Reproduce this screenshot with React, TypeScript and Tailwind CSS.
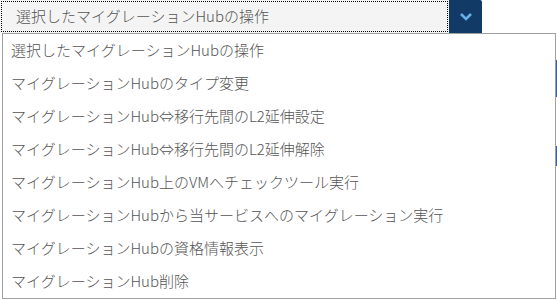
import React from "react";

const items: string[] = [
  "選択したマイグレーションHubの操作",
  "マイグレーションHubのタイプ変更",
  "マイグレーションHub⇔移行先間のL2延伸設定",
  "マイグレーションHub⇔移行先間のL2延伸解除",
  "マイグレーションHub上のVMへチェックツール実行",
  "マイグレーションHubから当サービスへのマイグレーション実行",
  "マイグレーションHubの資格情報表示",
  "マイグレーションHub削除",
];

const App: React.FC = () => {
  return (
    <div
      className="relative w-[557px] h-[300px] bg-white overflow-hidden flex flex-col"
      style={{ fontFamily: '"Noto Sans CJK JP", "Noto Sans", sans-serif' }}
    >
      {/* select */}
      <div className="flex w-[482px] h-[33px] shrink-0">
        <div className="flex-1 bg-[#f4f4f4] p-px">
          <div className="h-full border border-dotted border-black flex items-center pl-[14px] text-[15px] font-light text-[#555]">
            選択したマイグレーションHubの操作
          </div>
        </div>
        <button className="w-[33px] h-[33px] bg-[#123a66] rounded-tr-[2px] flex items-center justify-center">
          <svg width="14" height="10" viewBox="0 0 14 10">
            <path d="M2 2 L7 7 L12 2" fill="none" stroke="#6aaee6" strokeWidth="2.6" />
          </svg>
        </button>
      </div>

      {/* page content behind the open menu */}
      <div className="flex flex-col items-end pt-[27px] gap-[49px] pr-0 -mr-[3px]">
        <div className="w-[4px] h-[37px] bg-[#3a5f95]" />
        <div className="flex items-start">
          <div className="w-[2px] h-[5px] bg-black" />
          <div className="w-[4px] h-[20px] bg-[#3a5f95]" />
        </div>
      </div>

      {/* open menu */}
      <ul className="absolute left-[2px] top-[33px] w-[554px] border border-[#a0a0a0] bg-white">
        {items.map((t) => (
          <li key={t} className="h-[33px] flex items-center pl-[8px] text-[15px] font-light text-[#555] whitespace-nowrap">
            {t}
          </li>
        ))}
      </ul>
    </div>
  );
};

export default App;
